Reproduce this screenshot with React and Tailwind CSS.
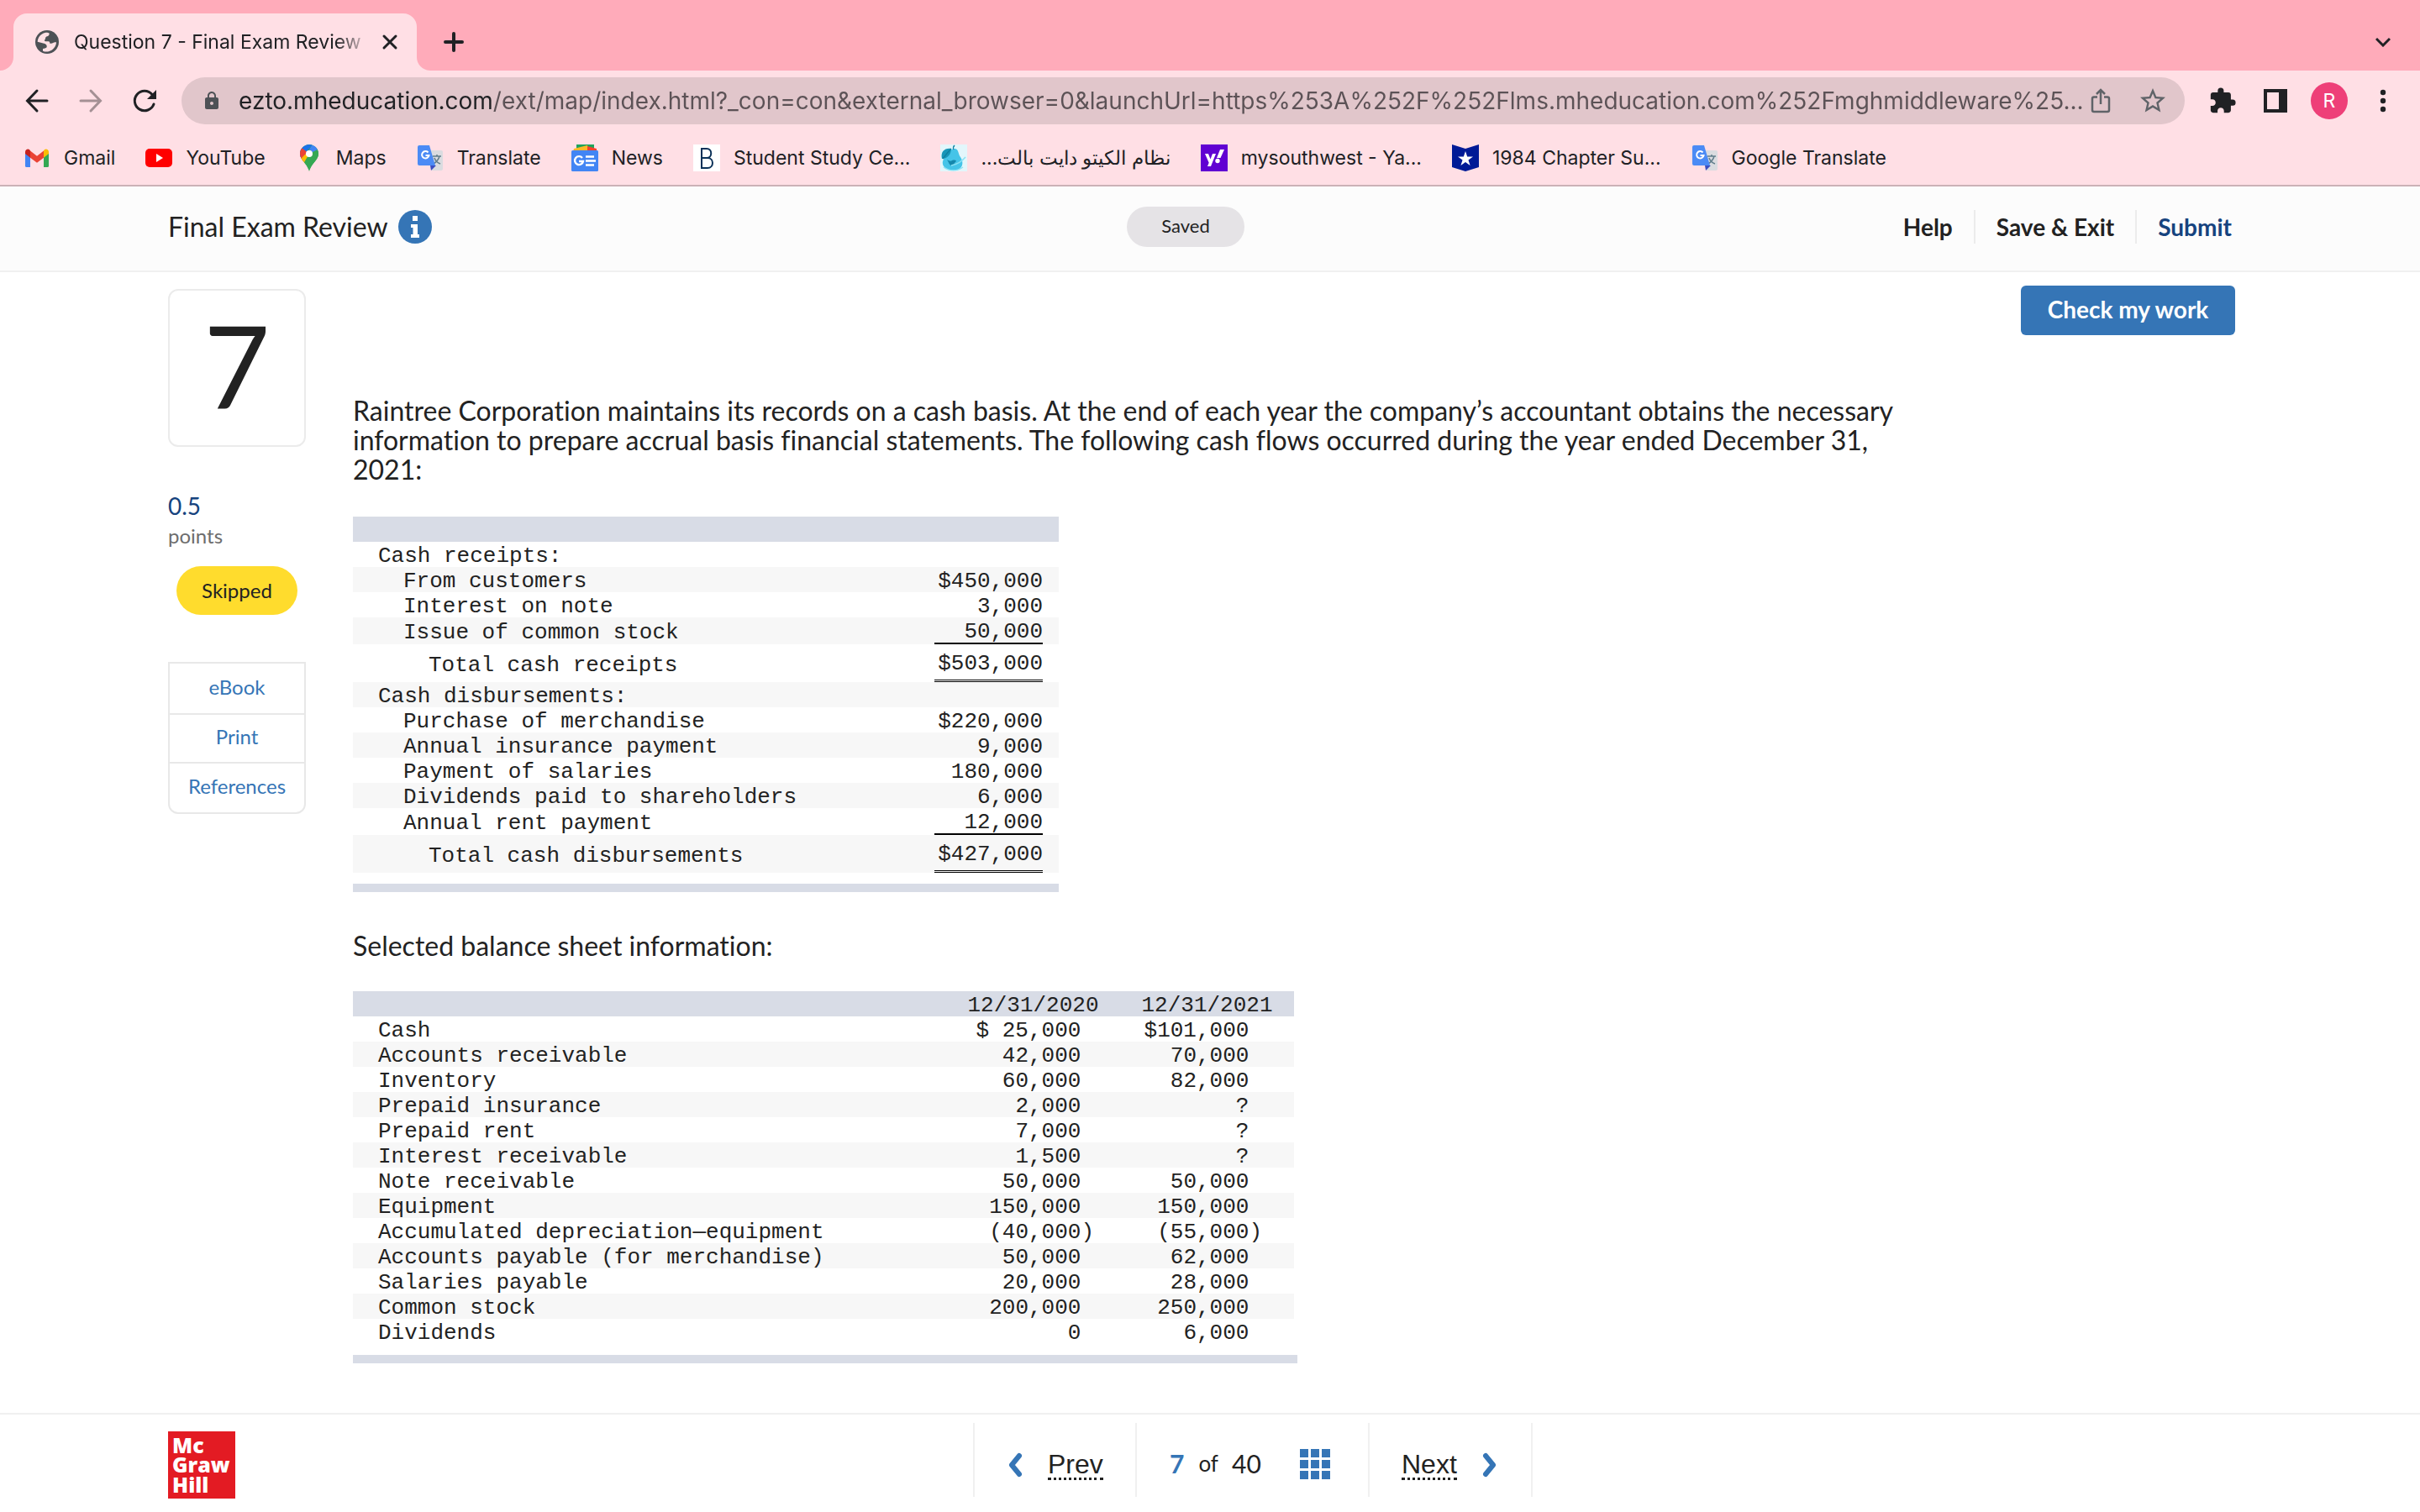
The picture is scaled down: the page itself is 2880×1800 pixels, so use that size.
import React from "react";
import { MdExtension, MdStarBorder, MdLock } from "react-icons/md";

const UI = "font-['Inter','Noto_Sans',sans-serif]";
const PAGE = "font-['Lato','Liberation_Sans',sans-serif] [font-variant-ligatures:none]";

function TabCorner({ flip }) {
  return (
    <svg className={flip ? "size-4 self-end -scale-x-100" : "size-4 self-end"} viewBox="0 0 16 16" fill="#ffdfe5" aria-hidden="true">
      <path d="M16 0v16H0A16 16 0 0 0 16 0z" />
    </svg>
  );
}

function GlobeIcon() {
  return (
    <svg className="size-7 shrink-0" viewBox="126 108 84 84" aria-hidden="true">
      <circle cx="168" cy="150" r="42" fill="#4d5156" />
      <path
        d="M134 149c1-15 12-29 27-32 5-1 12 0 15 2 0 6-2 9-7 11-5 1-7 4-7 8-1 3-3 4-3 7 0 2 2 3 6 3h8c4 0 5 4 5 7 4 0 7 1 10-1 4-3 9-4 13-3 0 14-12 29-27 33-7 1-15 1-21-2v-8c7-1 13-2 14-6 1-5-2-10-7-12z"
        fill="#ffdfe5"
      />
    </svg>
  );
}

function GmailIcon() {
  return (
    <svg className="size-8 shrink-0" viewBox="0 0 32 32" aria-hidden="true">
      <path d="M2 9v16.500a1.500 1.500 0 0 0 1.500 1.500H8V14.500z" fill="#4285f4" />
      <path d="M30 9v16.500a1.500 1.500 0 0 1-1.500 1.500H24V14.500z" fill="#34a853" />
      <path d="M8 7.500l8 6.200 8-6.200v8.200l-8 6-8-6z" fill="#ea4335" />
      <path d="M2 9c0-3 3-4.500 5-3l1 1.500v8.200L2 11z" fill="#c5221f" />
      <path d="M30 9c0-3-3-4.500-5-3l-1 1.500v8.200l6-4.700z" fill="#fbbc04" />
    </svg>
  );
}

function YouTubeIcon() {
  return (
    <svg className="size-8 shrink-0" viewBox="0 0 32 32" aria-hidden="true">
      <rect y="5" width="32" height="22" rx="5" fill="#f00" />
      <path d="M13 11l8 5-8 5z" fill="#fff" />
    </svg>
  );
}

function MapsIcon() {
  return (
    <svg className="size-8 shrink-0" viewBox="0 0 32 32" aria-hidden="true">
      <clipPath id="pin">
        <path d="M16 0C10 0 5 5 5 11c0 8 8 10 11 21 3-11 11-13 11-21C27 5 22 0 16 0z" />
      </clipPath>
      <g clipPath="url(#pin)">
        <rect width="32" height="32" fill="#34a853" />
        <path d="M0 22L28-8H0z" fill="#1a73e8" />
        <path d="M20 0h12v6L16 16l-4-4z" fill="#4285f4" />
        <path d="M7 4l9 7-9 11-7-8z" fill="#ea4335" />
        <path d="M5 18L16 7l8 0-15 18z" fill="#fbbc04" />
        <path d="M16 11L24 2l8 10-4 14-20 6 1-9z" fill="#34a853" />
        <path d="M16 11L23 0l6 2-3 4z" fill="#4285f4" />
      </g>
      <circle cx="16" cy="11" r="4" fill="#fff" />
    </svg>
  );
}

function TranslateIcon() {
  return (
    <svg className="size-8 shrink-0" viewBox="0 0 32 32" aria-hidden="true">
      <path d="M12 7h17a2 2 0 0 1 2 2v20a2 2 0 0 1-2 2H18z" fill="#dadce0" />
      <path d="M16 25h7l-6 6z" fill="#3a4fc1" />
      <path d="M19 14h10M24 12v2M27 14c-1 4-4 7-7 9M21 16c1 3 4 6 7 7" stroke="#607d8b" strokeWidth="1.500" fill="none" />
      <path d="M3 1h12l7 24H3a2 2 0 0 1-2-2V3a2 2 0 0 1 2-2z" fill="#4b8bf5" />
      <path d="M13.500 9.500a4.200 4.200 0 1 0 1 3.500H10.500" stroke="#fff" strokeWidth="2" fill="none" />
    </svg>
  );
}

function NewsIcon() {
  return (
    <svg className="size-8 shrink-0" viewBox="0 0 32 32" aria-hidden="true">
      <path d="M6 0h21v8H6z" fill="#1fa35b" />
      <path d="M3 5l16-4 3 8H2z" fill="#fbb829" />
      <path d="M19 2l11 3v4H19z" fill="#f4402f" />
      <rect y="7" width="32" height="25" rx="1.500" fill="#4285f4" />
      <path d="M13 16a5 5 0 1 0 1 4h-5" stroke="#fff" strokeWidth="2.400" fill="none" />
      <path d="M17 14.500h10M17 19.500h12M17 24.500h10" stroke="#fff" strokeWidth="2.600" />
    </svg>
  );
}

function StudyIcon() {
  return (
    <svg className="size-8 shrink-0" viewBox="0 0 32 32" aria-hidden="true">
      <rect width="32" height="32" fill="#fff" />
      <path d="M10 5v23h7c8 0 8-12 0-12h-7 6c7 0 7-11 0-11z" fill="none" stroke="#0b3158" strokeWidth="2" />
    </svg>
  );
}

function PearIcon() {
  return (
    <svg className="size-8 shrink-0" viewBox="0 0 32 32" aria-hidden="true">
      <rect width="32" height="32" fill="#e3f6fb" />
      <path d="M17 5c5 0 4 6 7 10 5 7 2 16-8 16S-1 24 5 16c4-4 6-11 12-11z" fill="#45c4e8" />
      <path d="M2 17C0 9 5 4 13 5c0 6-4 12-11 12z" fill="#1796b8" />
      <path d="M3 17C6 13 9 9 13 5M16 6c-1-2 0-4 1-5" stroke="#0f7fa0" strokeWidth="1.300" fill="none" />
      <path d="M8 18c3 2 5 2 6 1 3-1 5 0 5 1-2 1-3 5-6 5-2 0-3-4-5-7z" fill="#1588ad" />
      <path d="M13 25c6-1 12-4 17-10M4 27c7 5 16 5 23 0" stroke="#8be2f5" strokeWidth="1.500" fill="none" />
    </svg>
  );
}

function YahooIcon() {
  return (
    <svg className="size-8 shrink-0" viewBox="0 0 32 32" aria-hidden="true">
      <rect width="32" height="32" fill="#6001d2" />
      <path d="M5 11h4l2.500 6.500L14 11h4l-6 15H8l1.700-4.200z" fill="#fff" />
      <path d="M23 6h5l-4.500 10H19z" fill="#fff" />
      <circle cx="20" cy="19.500" r="2.700" fill="#fff" />
    </svg>
  );
}

function ShieldStarIcon() {
  return (
    <svg className="size-8 shrink-0" viewBox="0 0 32 32" aria-hidden="true">
      <path d="M0 0l16 5 16-5v27l-16 5-16-5z" fill="#001a96" />
      <path d="M16 8l2.200 6.500H25l-5.500 4 2.100 6.500-5.600-4-5.600 4 2.100-6.500-5.500-4h6.800z" fill="#fff" />
    </svg>
  );
}

const bookmarks = [
  { label: "Gmail", Icon: GmailIcon },
  { label: "YouTube", Icon: YouTubeIcon },
  { label: "Maps", Icon: MapsIcon },
  { label: "Translate", Icon: TranslateIcon },
  { label: "News", Icon: NewsIcon },
  { label: "Student Study Ce...", Icon: StudyIcon },
  { label: "نظام الكيتو دايت بالت...", Icon: PearIcon, rtl: true },
  { label: "mysouthwest - Ya...", Icon: YahooIcon },
  { label: "1984 Chapter Su...", Icon: ShieldStarIcon },
  { label: "Google Translate", Icon: TranslateIcon },
];

function BrowserChrome() {
  return (
    <div className={`${UI} bg-[#ffdfe5] text-[#202124]`}>
      <div className="flex h-[84px] items-end bg-[#ffabba]">
        <TabCorner />
        <div className="flex h-[68px] w-[480px] items-center rounded-t-2xl bg-[#ffdfe5] pr-[22px] pl-[26px]">
          <GlobeIcon />
          <span className="ml-[18px] flex-1 overflow-hidden text-[23px] whitespace-nowrap [mask-image:linear-gradient(90deg,#000_88%,transparent)]">
            Question 7 - Final Exam Review
          </span>
          <button type="button" aria-label="Close tab" className="ml-3">
            <svg className="size-5" viewBox="0 0 20 20" fill="none" stroke="currentColor" strokeWidth="3" strokeLinecap="round">
              <path d="M3 3l14 14M17 3L3 17" />
            </svg>
          </button>
        </div>
        <TabCorner flip />
        <button type="button" aria-label="New tab" className="flex h-[68px] w-14 items-center justify-center">
          <svg className="size-6" viewBox="0 0 24 24" fill="none" stroke="currentColor" strokeWidth="4" strokeLinecap="round">
            <path d="M12 2v20M2 12h20" />
          </svg>
        </button>
        <button type="button" aria-label="Search tabs" className="mr-4 ml-auto flex h-[68px] w-14 items-center justify-center">
          <svg className="h-3 w-[18px]" viewBox="0 0 18 12" fill="none" stroke="currentColor" strokeWidth="3">
            <path d="M1 2l8 8 8-8" />
          </svg>
        </button>
      </div>

      <div className="flex h-[72px] items-center pr-9 pl-7">
        <button type="button" aria-label="Back">
          <svg className="size-8" viewBox="0 0 32 32" fill="none" stroke="currentColor" strokeWidth="3" strokeLinecap="round">
            <path d="M28 16H5M16 4L4.500 16 16 28" />
          </svg>
        </button>
        <button type="button" aria-label="Forward" className="ml-8">
          <svg className="size-8" viewBox="0 0 32 32" fill="none" stroke="#a49094" strokeWidth="3" strokeLinecap="round">
            <path d="M4 16h23M16 4l11.500 12L16 28" />
          </svg>
        </button>
        <button type="button" aria-label="Reload" className="ml-8">
          <svg className="size-8" viewBox="0 0 32 32" fill="none" aria-hidden="true">
            <path d="M27 20a11.700 11.700 0 1 1-2-11.500" stroke="currentColor" strokeWidth="3" strokeLinecap="round" />
            <path d="M30 3v11H19z" fill="currentColor" />
          </svg>
        </button>
        <div className="ml-7 flex h-14 min-w-0 flex-1 items-center rounded-full bg-[#e1c6cb] pr-5 pl-6 text-[#5f6368]">
          <MdLock className="size-6 shrink-0 text-[#4d5156]" />
          <input
            type="text"
            readOnly
            aria-label="Address"
            className="ml-5 min-w-0 flex-1 bg-[linear-gradient(90deg,#202124_303px,#5c5256_303px)] bg-clip-text text-[28px] text-transparent outline-none"
            value="ezto.mheducation.com/ext/map/index.html?_con=con&external_browser=0&launchUrl=https%253A%252F%252Flms.mheducation.com%252Fmghmiddleware%25..."
          />
          <button type="button" aria-label="Share" className="shrink-0">
            <svg className="size-8" viewBox="0 0 32 32" fill="none" stroke="currentColor" strokeWidth="2.500">
              <path d="M12 11.500H8a2 2 0 0 0-2 2V27a2 2 0 0 0 2 2h16a2 2 0 0 0 2-2V13.500a2 2 0 0 0-2-2h-4M16 20V3M11 8l5-5 5 5" />
            </svg>
          </button>
          <button type="button" aria-label="Bookmark this tab" className="ml-7 shrink-0">
            <MdStarBorder className="size-9" />
          </button>
        </div>
        <button type="button" aria-label="Extensions" className="ml-7">
          <MdExtension className="size-[34px]" />
        </button>
        <button type="button" aria-label="Side panel" className="ml-8">
          <svg className="size-7" viewBox="0 0 28 28" fill="none" aria-hidden="true">
            <path d="M0 0h28v28H0zM4 4v20h14V4z" fill="currentColor" fillRule="evenodd" />
          </svg>
        </button>
        <button type="button" aria-label="Profile" className="ml-7 flex size-11 items-center justify-center rounded-full bg-[#ee3f78] text-[23px] text-white">
          R
        </button>
        <button type="button" aria-label="Menu" className="ml-[34px]">
          <svg className="h-7 w-4" viewBox="0 0 16 28" fill="currentColor" aria-hidden="true">
            <circle cx="8" cy="4" r="3.200" />
            <circle cx="8" cy="14" r="3.200" />
            <circle cx="8" cy="24" r="3.200" />
          </svg>
        </button>
      </div>

      <nav aria-label="Bookmarks" className="flex h-[66px] items-center gap-9 border-b-2 border-[#cbb1b6] pl-7 text-[23px] whitespace-nowrap">
        {bookmarks.map(({ label, Icon, rtl }) => (
          <a key={label} href="#" className="flex items-center gap-4">
            <Icon />
            <span dir={rtl ? "rtl" : "ltr"}>{label}</span>
          </a>
        ))}
      </nav>
    </div>
  );
}

function PageHeader() {
  return (
    <header className="grid h-[102px] grid-cols-[1141fr_1319fr] items-center border-b-2 border-[#f0f0f0] bg-[#fcfcfc] pr-[220px] pb-1 pl-[200px]">
      <div className="flex items-center">
        <h1 className="text-[32px] leading-10">Final Exam Review</h1>
        <button type="button" aria-label="Information" className="ml-3">
          <svg className="size-10" viewBox="0 0 40 40" aria-hidden="true">
            <circle cx="20" cy="20" r="20" fill="#3575b6" />
            <path d="M17 7h6v6h-6zM15 17h8v12h2v4H15v-4h2.500v-8H15z" fill="#fff" />
          </svg>
        </button>
      </div>
      <div className="flex items-center justify-between">
        <span className="flex h-12 w-[140px] items-center justify-center rounded-full bg-[#e5e3e6] pb-1 text-[22px]">Saved</span>
        <div className="flex items-center text-[28px] leading-10 font-bold">
          <button type="button" className="px-[25px]">Help</button>
          <button type="button" className="border-x-2 border-[#ececec] px-[25px]">Save &amp; Exit</button>
          <button type="button" className="pr-1 pl-[25px] text-[#16437e]">Submit</button>
        </div>
      </div>
    </header>
  );
}

const resources = ["eBook", "Print", "References"];

function Sidebar() {
  return (
    <aside className="w-[164px] shrink-0 pt-5">
      <div className="flex h-[188px] items-center justify-center rounded-xl border-2 border-[#ebebeb] pb-2 text-[136px] leading-none">7</div>
      <p className="mt-[52px] text-[28px] leading-9 text-[#16437e]">0.5</p>
      <p className="text-2xl leading-9 text-[#6d6d6d]">points</p>
      <p className="mx-auto mt-[18px] flex h-[58px] w-36 items-center justify-center rounded-full bg-[#ffdc2d] text-2xl">Skipped</p>
      <nav aria-label="Resources" className="mt-14 divide-y-2 divide-[#e8e8e8] rounded-b-xl border-2 border-[#e8e8e8] text-2xl text-[#3575b6]">
        {resources.map((name) => (
          <a key={name} href="#" className="flex h-[58px] items-center justify-center pb-1 first:h-[61px]">{name}</a>
        ))}
      </nav>
    </aside>
  );
}

const cashRows = [
  ["Cash receipts:", 0, ""],
  ["From customers", 1, "$450,000"],
  ["Interest on note", 1, "3,000"],
  ["Issue of common stock", 1, "50,000", "last"],
  ["Total cash receipts", 2, "$503,000", "total"],
  ["Cash disbursements:", 0, ""],
  ["Purchase of merchandise", 1, "$220,000"],
  ["Annual insurance payment", 1, "9,000"],
  ["Payment of salaries", 1, "180,000"],
  ["Dividends paid to shareholders", 1, "6,000"],
  ["Annual rent payment", 1, "12,000", "last"],
  ["Total cash disbursements", 2, "$427,000", "total"],
];

const indents = ["pl-[30px]", "pl-[60px]", "pl-[90px]"];

const amountStyle = {
  last: "border-b-2 border-black pt-1",
  total: "border-b-3 border-double border-black pt-[10px] pb-[6px]",
};

const TABLE = "table-fixed border-separate border-spacing-0 font-['Liberation_Mono',monospace] text-[26px] leading-[26px] whitespace-nowrap";

function CashFlowTable() {
  return (
    <table className={`${TABLE} w-[840px]`}>
      <colgroup>
        <col />
        <col className="w-[129px]" />
        <col className="w-[19px]" />
      </colgroup>
      <thead>
        <tr className="h-[30px] bg-[#d8dce6]"><td colSpan={3} /></tr>
      </thead>
      <tbody>
        {cashRows.map(([label, level, amount, kind]) => (
          <tr key={label} className="even:bg-[#f7f7f7]">
            <th scope="row" className={`${indents[level]} pt-1 text-left align-middle font-normal`}>{label}</th>
            <td className={`${amountStyle[kind] || "pt-1"} text-right`}>{amount}</td>
            <td />
          </tr>
        ))}
      </tbody>
      <tfoot>
        <tr className="h-[13px]"><td colSpan={3} /></tr>
        <tr className="h-[10px] bg-[#d8dce6]"><td colSpan={3} /></tr>
      </tfoot>
    </table>
  );
}

const balanceRows = [
  ["Cash", "$ 25,000", "$101,000"],
  ["Accounts receivable", "42,000", "70,000"],
  ["Inventory", "60,000", "82,000"],
  ["Prepaid insurance", "2,000", "?"],
  ["Prepaid rent", "7,000", "?"],
  ["Interest receivable", "1,500", "?"],
  ["Note receivable", "50,000", "50,000"],
  ["Equipment", "150,000", "150,000"],
  ["Accumulated depreciation—equipment", "(40,000)", "(55,000)"],
  ["Accounts payable (for merchandise)", "50,000", "62,000"],
  ["Salaries payable", "20,000", "28,000"],
  ["Common stock", "200,000", "250,000"],
  ["Dividends", "0", "6,000"],
];

// Keeps the digits of plain amounts in line with those in parentheses.
const aligned = (value) => (value.endsWith(")") ? value : `${value}\u00a0`);

function BalanceTable() {
  return (
    <div className="w-[1124px] border-b-10 border-[#d8dce6] pb-[13px]">
      <table className={`${TABLE} w-[1120px]`}>
        <colgroup>
          <col />
          <col className="w-[207px]" />
          <col className="w-[207px]" />
        </colgroup>
        <thead>
          <tr className="bg-[#d8dce6]">
            <td />
            <th scope="col" className="pt-1 font-normal">12/31/2020</th>
            <th scope="col" className="pt-1 font-normal">12/31/2021</th>
          </tr>
        </thead>
        <tbody>
          {balanceRows.map(([label, before, after]) => (
            <tr key={label} className="even:bg-[#f7f7f7]">
              <th scope="row" className="pt-1 pl-[30px] text-left font-normal">{label}</th>
              <td className="pt-1 pr-[31px] text-right">{aligned(before)}</td>
              <td className="pt-1 pr-[38px] text-right">{aligned(after)}</td>
            </tr>
          ))}
        </tbody>
      </table>
    </div>
  );
}

function PageFooter() {
  return (
    <footer className="grid h-[118px] grid-cols-[1158fr_auto_1056fr] items-start border-t-2 border-[#f0f0f0]">
      <svg className="mt-5 ml-[200px] size-20" viewBox="0 0 80 80" role="img" aria-label="McGraw Hill">
        <rect width="80" height="80" fill="#e31b23" />
        <g fill="#fff" fontFamily="'Open Sans', sans-serif" fontWeight="800" fontSize="25">
          <text x="5" y="26">Mc</text>
          <text x="5" y="49">Graw</text>
          <text x="5" y="73">Hill</text>
        </g>
      </svg>
      <nav aria-label="Questions" className="mt-[10px] flex h-[88px] divide-x-2 divide-[#f0f0f0] border-x-2 border-[#f0f0f0]">
        <a href="#" className="flex w-[193px] items-center pt-3 pl-[38px] font-['Liberation_Sans',sans-serif] text-[32px] leading-8">
          <svg className="mr-[29px] h-[30px] w-5" viewBox="0 0 20 30" fill="none" stroke="#3575b6" strokeWidth="6" strokeLinecap="round" strokeLinejoin="round">
            <path d="M15 4L6 15l9 11" />
          </svg>
          <span className="border-b-3 border-dotted border-[#222]">Prev</span>
        </a>
        <div className="flex w-[277px] items-center pt-2 pl-[39px] text-[30px]">
          <span className="font-bold text-[#3575b6]">7</span>
          <span className="ml-[17px] text-[26px]">of</span>
          <span className="ml-4">40</span>
          <button type="button" aria-label="Question map" className="ml-[46px] pt-[2px]">
            <svg className="size-9" viewBox="0 0 36 36" fill="#3575b6" aria-hidden="true">
              {[0, 13, 26].map((y) => [0, 13, 26].map((x) => <rect key={`${x}-${y}`} x={x} y={y} width="10" height="10" />))}
            </svg>
          </button>
        </div>
        <a href="#" className="flex w-[192px] items-center pt-3 pl-[38px] font-['Liberation_Sans',sans-serif] text-[32px] leading-8">
          <span className="border-b-3 border-dotted border-[#222]">Next</span>
          <svg className="ml-[29px] h-[30px] w-5" viewBox="0 0 20 30" fill="none" stroke="#3575b6" strokeWidth="6" strokeLinecap="round" strokeLinejoin="round">
            <path d="M5 4l9 11-9 11" />
          </svg>
        </a>
      </nav>
    </footer>
  );
}

export default function App() {
  return (
    <div className="flex min-h-screen flex-col bg-white">
      <BrowserChrome />
      <div className={`${PAGE} flex flex-1 flex-col text-[#222]`}>
        <PageHeader />
        <main className="flex flex-1 pr-[220px] pl-[200px]">
          <Sidebar />
          <section className="ml-14 flex min-w-0 flex-1 flex-col pt-4">
            <button type="button" className="h-[59px] w-[255px] self-end rounded-md bg-[#3575b6] pb-1 text-[28px] font-bold text-white">
              Check my work
            </button>
            <p className="mt-[72px] mb-[39px] max-w-[1880px] text-[32px] leading-[35px]">
              Raintree Corporation maintains its records on a cash basis. At the end of each year the company’s accountant obtains the necessary
              information to prepare accrual basis financial statements. The following cash flows occurred during the year ended December 31,
              2021:
            </p>
            <CashFlowTable />
            <p className="mt-[46px] mb-[37px] text-[32px] leading-[35px]">Selected balance sheet information:</p>
            <BalanceTable />
          </section>
        </main>
        <PageFooter />
      </div>
    </div>
  );
}
